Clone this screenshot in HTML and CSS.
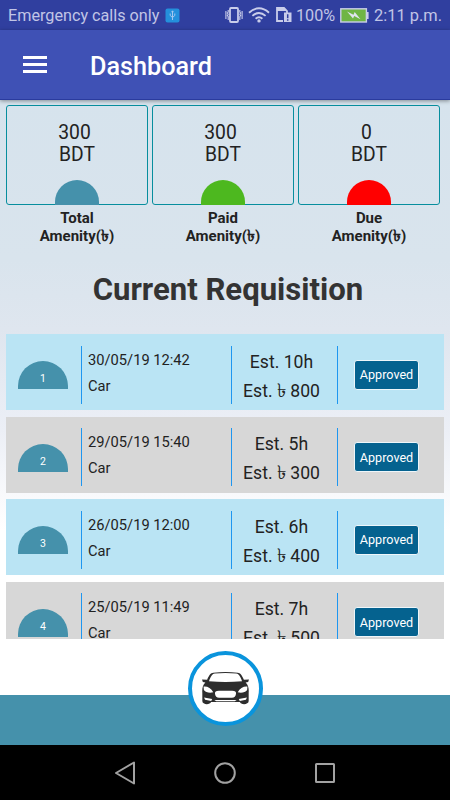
FILE: index.html
```html
<!DOCTYPE html>
<html lang="en">
<head>
<meta charset="UTF-8">
<meta name="viewport" content="width=device-width, initial-scale=1.0">
<title>Dashboard</title>
<link rel="stylesheet" href="styles.css">
</head>
<body>
<div class="status-bar">
    <span class="carrier">Emergency calls only</span>
    <svg class="usb" width="15" height="15" viewBox="0 0 15 15">
        <rect x="0.5" y="0.5" width="14" height="14" rx="2" fill="#2490dc"/>
        <path d="M7.5 3v9M5.2 5.5v2l2.3 2 2.3-2v-2M6.5 4.2l1-1.4 1 1.4" fill="none" stroke="#a5c8f0" stroke-width="1"/>
    </svg>
    <div class="status-icons">
        <svg class="vibrate" width="18" height="16" viewBox="0 0 18 16">
            <rect x="5" y="1" width="8" height="14" rx="1" fill="none" stroke="#c9cdea" stroke-width="1.8"/>
            <path d="M3.2 3v2l-.8 1 .8 1.2-.8 1.2.8 1.2V13M.9 4v8M14.8 3v2l.8 1-.8 1.2.8 1.2-.8 1.2V13M17.1 4v8" fill="none" stroke="#c9cdea" stroke-width="1.1"/>
        </svg>
        <svg class="wifi" width="22" height="16" viewBox="0 0 22 16">
            <path d="M1 5.7Q11-3 21 5.7M4.4 8.9Q11 3.2 17.6 8.9M7.6 11.8Q11 8.8 14.4 11.8" fill="none" stroke="#c9cdea" stroke-width="1.9"/>
            <circle cx="11" cy="13.9" r="1.7" fill="#c9cdea"/>
        </svg>
        <svg class="sim" width="16" height="16" viewBox="0 0 16 16">
            <path d="M7 14H1V1h7l3 3v2" fill="none" stroke="#c9cdea" stroke-width="1.8"/>
            <path d="M1 1h7l3 3H1z" fill="#c9cdea"/>
            <path d="M8 5.5h7.5V15H8z" fill="#c9cdea"/>
            <path d="M11.7 7.2v4M11.7 12.2v1.5" stroke="#303f9f" stroke-width="1.5"/>
        </svg>
        <span class="percent">100%</span>
        <svg class="battery" width="29" height="15" viewBox="0 0 29 15">
            <rect x="0.8" y="0.8" width="25.6" height="13.2" fill="#6fb544" stroke="#c9cdea" stroke-width="1.4"/>
            <path d="M27 4h1.6v7H27z" fill="#c9cdea"/>
            <path d="M7 3.500l6.500 3.200 1.200-2.700 5.800 7.200-6.300-3.200-1.200 2.500z" fill="#dfe4ee"/>
        </svg>
        <span class="clock">2:11 p.m.</span>
    </div>
</div>

<header class="app-bar">
    <div class="menu"><span></span><span></span><span></span></div>
    <h1>Dashboard</h1>
</header>

<main class="content">
    <section class="summary">
        <div class="summary-item">
            <div class="card">
                <p class="amount">300</p>
                <p>BDT</p>
                <span class="dome total"></span>
            </div>
            <div class="caption">Total<br>Amenity(<span class="taka">৳</span>)</div>
        </div>
        <div class="summary-item">
            <div class="card">
                <p class="amount">300</p>
                <p>BDT</p>
                <span class="dome paid"></span>
            </div>
            <div class="caption">Paid<br>Amenity(<span class="taka">৳</span>)</div>
        </div>
        <div class="summary-item">
            <div class="card">
                <p class="amount">0</p>
                <p>BDT</p>
                <span class="dome due"></span>
            </div>
            <div class="caption">Due<br>Amenity(<span class="taka">৳</span>)</div>
        </div>
    </section>

    <h2>Current Requisition</h2>

    <div class="list">
        <div class="row">
            <div class="number"><span>1</span></div>
            <div class="info"><p>30/05/19 12:42</p><p>Car</p></div>
            <div class="estimate"><p>Est. 10h</p><p>Est. <span class="taka">৳</span> 800</p></div>
            <div class="state"><button>Approved</button></div>
        </div>
        <div class="row grey">
            <div class="number"><span>2</span></div>
            <div class="info"><p>29/05/19 15:40</p><p>Car</p></div>
            <div class="estimate"><p>Est. 5h</p><p>Est. <span class="taka">৳</span> 300</p></div>
            <div class="state"><button>Approved</button></div>
        </div>
        <div class="row">
            <div class="number"><span>3</span></div>
            <div class="info"><p>26/05/19 12:00</p><p>Car</p></div>
            <div class="estimate"><p>Est. 6h</p><p>Est. <span class="taka">৳</span> 400</p></div>
            <div class="state"><button>Approved</button></div>
        </div>
        <div class="row grey">
            <div class="number"><span>4</span></div>
            <div class="info"><p>25/05/19 11:49</p><p>Car</p></div>
            <div class="estimate"><p>Est. 7h</p><p>Est. <span class="taka">৳</span> 500</p></div>
            <div class="state"><button>Approved</button></div>
        </div>
    </div>
</main>

<footer class="bottom-bar">
    <div class="car-button">
        <svg width="49" height="34" viewBox="0 0 48 34" preserveAspectRatio="none">
            <path d="M1 7.5l5 .2C8 3 9.500 1.200 12 .8Q24-.6 36 .8C38.500 1.200 40 3 42 7.700l5-.2-.8 2.500-2.500.5C46.500 13 47 17 46.700 21v8c0 4-8 4-8.500 1H9.800C9 33 1.300 33 1.300 29v-8C1 17 1.500 13 4.300 10.500L1.800 10z" fill="#2d2d2d"/>
            <path d="M7.800 9.300C9.800 4 11 1.900 13.500 1.600Q24 .5 34.500 1.600C37 1.900 38.200 4 40.200 9.300Q24 10.800 7.800 9.300z" fill="#fff"/>
            <path d="M2.500 14.500C6 14 10 16 12 20.300 8.500 21.300 4.500 20.500 2.800 18zM45.500 14.500C42 14 38 16 36 20.300c3.500 1 7.500.2 9.200-2.300z" fill="#fff"/>
            <path d="M17.500 18.800h13q4.300 0 3.800 3-.5 4-4 4H17.700q-3.500 0-4-4-.5-3 3.800-3z" fill="#fff"/>
            <path d="M3 25.500l8 1.500-1 2-6-1.200zM45 25.500L37 27l1 2 6-1.200zM13 28h22l-2 1.200H15z" fill="#fff"/>
        </svg>
    </div>
</footer>

<nav class="nav-bar">
    <svg width="22" height="24" viewBox="0 0 22 24"><path d="M20 1.500v21L2 12z" fill="none" stroke="#a2a2a2" stroke-width="2" stroke-linejoin="round"/></svg>
    <svg width="22" height="22" viewBox="0 0 22 22"><circle cx="11" cy="11" r="9.800" fill="none" stroke="#a2a2a2" stroke-width="2"/></svg>
    <svg width="22" height="22" viewBox="0 0 22 22"><rect x="2" y="2" width="18" height="18" rx="0.500" fill="none" stroke="#a2a2a2" stroke-width="2"/></svg>
</nav>
</body>
</html>
```
FILE: styles.css
```css
* {
    box-sizing: border-box;
}
body {
    margin: 0;
    width: 450px;
    height: 800px;
    overflow: hidden;
    display: flex;
    flex-direction: column;
    font-family: Roboto, "Noto Sans", sans-serif;
    color: #222;
    background: #fff;
}
p, h1, h2 {
    margin: 0;
}

/* Status bar */
.status-bar {
    height: 30px;
    display: flex;
    align-items: center;
    padding: 0 8px;
    background: #303f9f;
    color: #c1c5e6;
    font-size: 16.200px;
    white-space: nowrap;
}
.usb {
    margin-left: 6px;
}
.status-icons {
    display: flex;
    align-items: center;
    margin-left: auto;
}
.wifi {
    margin-left: 5px;
}
.sim {
    margin-left: 6px;
}
.percent {
    margin-left: 4px;
}
.battery {
    margin: 0 5px;
}
.clock {
    font-size: 16.400px;
}

/* Toolbar */
.app-bar {
    position: relative;
    height: 70px;
    flex-shrink: 0;
    display: flex;
    align-items: center;
    padding: 3px 23px 0;
    background: #3f51b5;
    border-bottom: 1px solid #2a3b9e;
    box-shadow: 0 1px 4px rgba(0, 0, 0, 0.4);
}
.menu {
    width: 24px;
    height: 17px;
    display: flex;
    flex-direction: column;
    justify-content: space-between;
    margin-top: -4px;
}
.menu span {
    height: 3px;
    background: #fff;
}
.app-bar h1 {
    margin-left: 43px;
    font-size: 25.200px;
    font-weight: 500;
    color: #fff;
}

/* Content */
.content {
    height: 539px;
    flex-shrink: 0;
    overflow: hidden;
    padding: 5px 6px 0;
    background: linear-gradient(#d6e3ed 0, #d9e4ed 160px, #dfe6ef 230px, #eceff6 330px, #fff 430px);
}
.summary {
    display: flex;
    gap: 4px;
}
.summary-item {
    width: 142px;
    text-align: center;
}
.card {
    height: 100px;
    display: flex;
    flex-direction: column;
    align-items: center;
    padding-top: 16px;
    border: 1px solid #078e9e;
    border-radius: 3px;
    font-size: 19.300px;
    line-height: 22px;
}
.amount {
    padding-right: 5px;
}
.dome {
    width: 44px;
    height: 25px;
    margin-top: auto;
    margin-bottom: -1px;
    border-radius: 22px 22px 0 0;
}
.total {
    background: #4591ab;
}
.paid {
    background: #4db81f;
}
.due {
    background: #f00;
}
.caption {
    height: 36px;
    margin-top: 5px;
    font-size: 15px;
    font-weight: 700;
    line-height: 17.500px;
}
.caption .taka {
    font-size: 16px;
    line-height: 1;
}
.content h2 {
    margin-top: 25px;
    height: 38px;
    padding-left: 6px;
    line-height: 38px;
    font-size: 31.100px;
    font-weight: 700;
    text-align: center;
    color: #333;
}

/* Requisitions */
.list {
    margin-top: 25px;
    display: flex;
    flex-direction: column;
    gap: 6.500px;
}
.row {
    height: 76px;
    display: grid;
    grid-template-columns: 75px 150px 106px 107px;
    align-items: center;
    background: #bae4f4;
}
.row.grey {
    background: #d7d7d7;
}
.number span {
    display: block;
    width: 50px;
    height: 28px;
    margin: 6px 0 0 12px;
    padding-top: 4px;
    border-radius: 25px 25px 0 0;
    background: #4591ab;
    color: #fff;
    font-size: 10.500px;
    line-height: 28px;
    text-align: center;
}
.info, .estimate, .state {
    height: 58px;
    margin-top: 5px;
    border-left: 1px solid #1e96f0;
}
.info {
    padding: 1px 0 0 6px;
    font-size: 14.700px;
    line-height: 26px;
}
.estimate {
    padding: 2px 6px 0 0;
    font-size: 17.600px;
    line-height: 29px;
    text-align: center;
    white-space: nowrap;
}
.estimate .taka {
    font-size: 19px;
    line-height: 1;
}
.state {
    display: flex;
    align-items: center;
    padding-left: 16px;
}
.state button {
    width: 65px;
    height: 30px;
    padding: 0;
    border: 1px solid #eef6fa;
    border-radius: 3px;
    background: #05628f;
    color: #fff;
    font-family: inherit;
    font-size: 12.600px;
}

/* Bottom */
.bottom-bar {
    height: 106px;
    flex-shrink: 0;
    display: flex;
    justify-content: center;
    background: linear-gradient(#fff 56px, #4591ab 56px);
}
.car-button {
    width: 75px;
    height: 75px;
    margin-top: 12px;
    display: flex;
    align-items: center;
    justify-content: center;
    border: 4px solid #0a94dc;
    border-radius: 50%;
    background: #fff;
}
.nav-bar {
    height: 55px;
    flex-shrink: 0;
    display: flex;
    align-items: center;
    justify-content: center;
    gap: 78px;
    background: #000;
}
```
